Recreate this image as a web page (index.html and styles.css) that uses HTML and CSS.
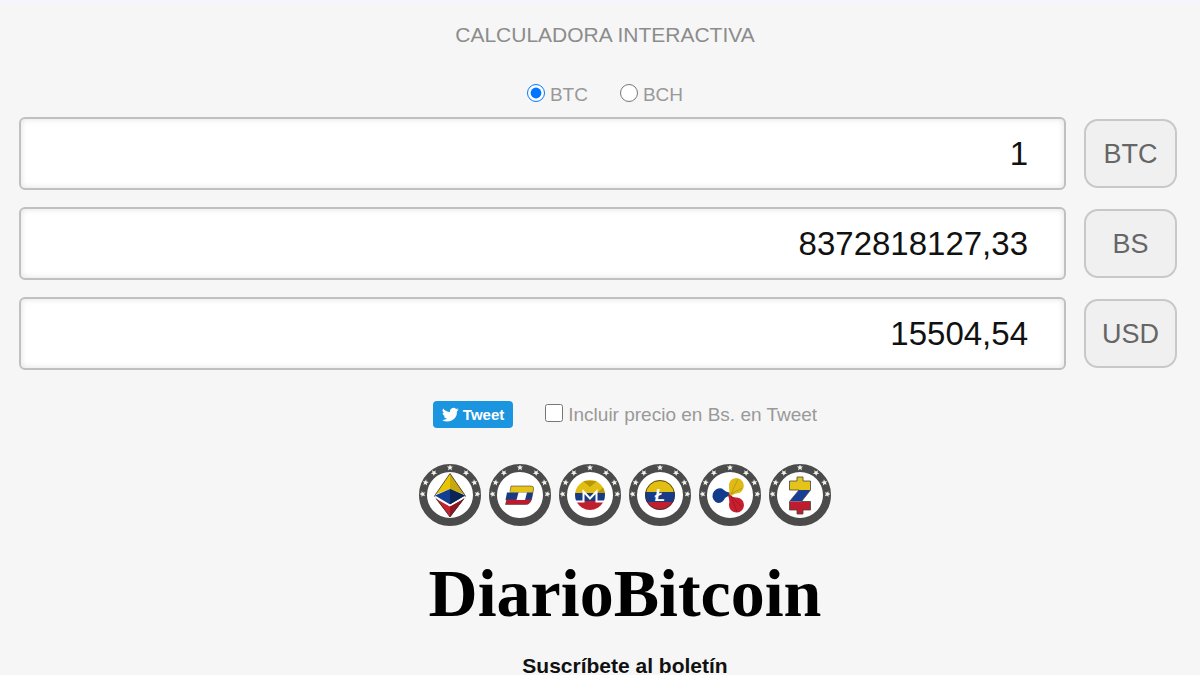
FILE: index.html
```html
<!DOCTYPE html>
<html lang="es">

<head>
    <meta charset="UTF-8">
    <meta name="viewport" content="width=device-width, initial-scale=1.0">
    <title>Calculadora Interactiva</title>
    <link rel="stylesheet" href="styles.css">
</head>

<body>
    <main id="calculator">
        <h1 class="title">CALCULADORA INTERACTIVA</h1>

        <form>
            <div class="coins">
                <label><input type="radio" name="coin" value="btc" checked>BTC</label>
                <label><input type="radio" name="coin" value="bch">BCH</label>
            </div>

            <div class="row">
                <input type="text" id="btc" class="amount" value="1">
                <label for="btc" class="unit">BTC</label>
            </div>
            <div class="row">
                <input type="text" id="bs" class="amount" value="8372818127,33">
                <label for="bs" class="unit">BS</label>
            </div>
            <div class="row">
                <input type="text" id="usd" class="amount" value="15504,54">
                <label for="usd" class="unit">USD</label>
            </div>

            <div class="share">
                <button type="button" class="tweet">
                    <svg width="17" height="17" viewBox="0 0 24 24"><path fill="#fff" d="M23.6 4.9a9.6 9.6 0 0 1-2.8.8 4.8 4.8 0 0 0 2.1-2.7 9.7 9.7 0 0 1-3.1 1.2 4.8 4.8 0 0 0-8.3 4.4A13.7 13.7 0 0 1 1.6 3.5a4.8 4.8 0 0 0 1.5 6.5 4.8 4.8 0 0 1-2.2-.6 4.8 4.8 0 0 0 3.9 4.8 4.9 4.9 0 0 1-2.2.1 4.8 4.8 0 0 0 4.5 3.4A9.7 9.7 0 0 1 0 19.7a13.7 13.7 0 0 0 21.1-12.2 9.8 9.8 0 0 0 2.5-2.6z"/></svg>
                    Tweet
                </button>
                <label><input type="checkbox" name="include">Incluir precio en Bs. en Tweet</label>
            </div>
        </form>

        <svg class="defs" width="0" height="0">
            <defs>
                <g id="ring">
                    <circle cx="32" cy="32" r="27" fill="#fff" stroke="#4b4b4b" stroke-width="8"/>
                    <g fill="#f2f2ea">
                        <path id="star" d="M32 1.5l.9 2 2.2.1-1.7 1.4.6 2.2-2-1.2-2 1.2.6-2.2-1.7-1.4 2.2-.1z"/>
                        <use href="#star" transform="rotate(36 32 32)"/>
                        <use href="#star" transform="rotate(63 32 32)"/>
                        <use href="#star" transform="rotate(88 32 32)"/>
                        <use href="#star" transform="rotate(-36 32 32)"/>
                        <use href="#star" transform="rotate(-63 32 32)"/>
                        <use href="#star" transform="rotate(-88 32 32)"/>
                    </g>
                </g>
                <clipPath id="disc"><circle cx="32" cy="32" r="15"/></clipPath>
            </defs>
        </svg>

        <div class="icons">
            <!-- Ethereum -->
            <svg viewBox="0 0 64 64">
                <use href="#ring"/>
                <path fill="#e9c400" d="M32 10.5L46.5 31.5 32 26 17.5 31.5z"/>
                <path fill="#c9a80c" d="M32 10.5L46.5 31.5 32 26z"/>
                <path fill="#123f91" d="M32 26L47 32.5 32 41.5 17 32.5z"/>
                <path fill="#0b2457" d="M32 26L47 32.5 32 41.5z"/>
                <path fill="#c7222f" d="M17.5 35.5L32 43.5 46.5 35.5 32 54z"/>
                <path fill="#8e1722" d="M32 43.5L46.5 35.5 32 54z"/>
                <path fill="none" stroke="#333" stroke-width=".8" d="M32 10.5L16.5 33 32 54 47.5 33z"/>
                <path fill="none" stroke="#fff" stroke-width="1.2" d="M17 34L32 42.5 47 34"/>
            </svg>
            <!-- Dash -->
            <svg viewBox="0 0 64 64">
                <use href="#ring"/>
                <path fill="#e6c417" d="M23 23h20q3 0 2.6 3l-.6 4H21.500z"/>
                <path fill="#173b86" d="M19 29.500h26l-1.500 7.500H17.500z"/>
                <path fill="#bd1b2b" d="M18.5 36.500H43.500q-1.500 5-5.500 5H17.500z"/>
                <path fill="#fff" d="M30.5 29.500h8.500l-2 7.500h-8.500z"/>
                <path fill="none" stroke="#444" stroke-width=".6" d="M22 28.500l1-5.500h20q3 0 2.600 3l-2 10q-1.600 5.500-6 5.500H17.500l1.500-5"/>
            </svg>
            <!-- Monero -->
            <svg viewBox="0 0 64 64">
                <use href="#ring"/>
                <g clip-path="url(#disc)">
                    <path fill="#e2bd12" d="M16 16h32v15H16z"/>
                    <path fill="#173b86" d="M16 30h32v8H16z"/>
                    <path fill="#c0202e" d="M16 38h32v10H16z"/>
                    <path fill="#b5960c" d="M25 18h14l-7 6zM39 30l9-8v8z"/>
                </g>
                <path fill="none" stroke="#fff" stroke-width="2" d="M17 38.5h8.500V28.500L32 35.500l6.500-7v10H47"/>
            </svg>
            <!-- Litecoin -->
            <svg viewBox="0 0 64 64">
                <use href="#ring"/>
                <g clip-path="url(#disc)">
                    <path fill="#e2bd12" d="M16 16h32v14H16z"/>
                    <path fill="#173b86" d="M16 29h32v10H16z"/>
                    <path fill="#c0202e" d="M16 39h32v9H16z"/>
                </g>
                <circle cx="32" cy="32" r="14.5" fill="none" stroke="#333" stroke-width=".8"/>
                <text x="32" y="38" class="lite">Ł</text>
            </svg>
            <!-- Ripple -->
            <svg viewBox="0 0 64 64">
                <use href="#ring"/>
                <path fill="#133d8c" d="M34 32q-5 1-7 3-2 5-7 5a7.500 7.500 0 1 1 4-14.500q4 4 10 4.500z"/>
                <path fill="#dfba14" d="M31 33q1-4 0-8-1-9 7-10a7.800 7.800 0 0 1 3 15q-4 0-8 3z"/>
                <path fill="#c81f30" d="M31 31q4 4 8 3.500a7.500 7.500 0 1 1-8 7q1-5-1-9z"/>
                <path fill="none" stroke="#a58a10" stroke-width=".6" d="M33 31l7-15M33 31l11-6"/>
                <path fill="none" stroke="#8d1420" stroke-width=".6" d="M33 33l6 16M33 33l11 11"/>
            </svg>
            <!-- Zcash -->
            <svg viewBox="0 0 64 64">
                <use href="#ring"/>
                <path fill="#e6c417" d="M29 14h6v4h7.500v9h-21v-9H29z"/>
                <path fill="#173f94" d="M31 27h11.500L33.500 38.500H21.500z"/>
                <path fill="#be1d2d" d="M21.5 38.500h21v8.500H35v4h-6v-4h-7.500z"/>
                <path fill="none" stroke="#444" stroke-width=".8" d="M29 14h6v4h7.500v9L33.500 38.500h9v8.500H35v4h-6v-4h-7.500v-8.500L31 27H21.500v-9H29z"/>
            </svg>
        </div>

        <div class="logo">DiarioBitcoin</div>
        <h2 class="subscribe">Suscríbete al boletín</h2>
    </main>
</body>

</html>
```
FILE: styles.css
```css
html {
  overflow: hidden;
}

body {
  margin: 0;
  background-color: #f6f6f6;
  border-top: 3px solid #f5f6fd;
  font-family: Arial, "Liberation Sans", sans-serif;
  font-size: 19px;
  color: #999;
}

#calculator {
  padding: 20px 23px 0 19px;
}

.title {
  margin: 0;
  padding-left: 14px;
  font-size: 21px;
  line-height: 24px;
  font-weight: normal;
  text-align: center;
  color: #8c8c8c;
}

.coins {
  display: flex;
  justify-content: center;
  gap: 32px;
  margin-top: 36px;
  margin-bottom: 10px;
  padding-left: 14px;
  line-height: 24px;
}

label {
  display: flex;
  align-items: center;
}

input[type="radio"],
input[type="checkbox"] {
  width: 18px;
  height: 18px;
  margin: 0 5px 4px 0;
}

.row {
  display: flex;
  align-items: center;
  gap: 18px;
  margin-bottom: 17px;
}

.amount {
  flex: 1;
  min-width: 0;
  box-sizing: border-box;
  height: 73px;
  padding: 0 36px;
  border: 2px solid #c0c0c0;
  border-radius: 6px;
  background-color: #fff;
  box-shadow: inset 0 0 6px #e0e0e0;
  font-family: inherit;
  font-size: 33px;
  text-align: right;
  color: #111;
}

.unit {
  box-sizing: border-box;
  justify-content: center;
  width: 93px;
  height: 69px;
  padding-top: 2px;
  border: 2px solid #c8c8c8;
  border-radius: 14px;
  background-color: #f0f0f0;
  font-size: 27px;
  color: #666;
}

.share {
  display: flex;
  justify-content: center;
  align-items: center;
  gap: 32px;
  margin-top: 31px;
  padding-left: 54px;
}

.tweet {
  display: flex;
  align-items: center;
  gap: 4px;
  height: 27px;
  padding: 0 9px;
  border: none;
  border-radius: 4px;
  background-color: #1b95e0;
  color: #fff;
  font-family: inherit;
  font-size: 15px;
  font-weight: bold;
}

.defs {
  position: absolute;
}

.icons {
  display: flex;
  justify-content: center;
  gap: 6px;
  margin-top: 35px;
  padding-left: 54px;
}

.icons svg {
  width: 64px;
  height: 64px;
}

.lite {
  font-family: "Liberation Sans", sans-serif;
  font-size: 17px;
  font-weight: bold;
  font-style: italic;
  text-anchor: middle;
  fill: #fff;
}

.logo {
  margin-top: 28px;
  padding-left: 54px;
  font-family: "Old English Text MT", "Liberation Serif", serif;
  font-size: 68px;
  font-weight: bold;
  line-height: 76px;
  text-align: center;
  color: #000;
}

.subscribe {
  margin: 23px 0 0;
  padding-left: 54px;
  font-size: 21px;
  line-height: 24px;
  text-align: center;
  color: #111;
}
```
